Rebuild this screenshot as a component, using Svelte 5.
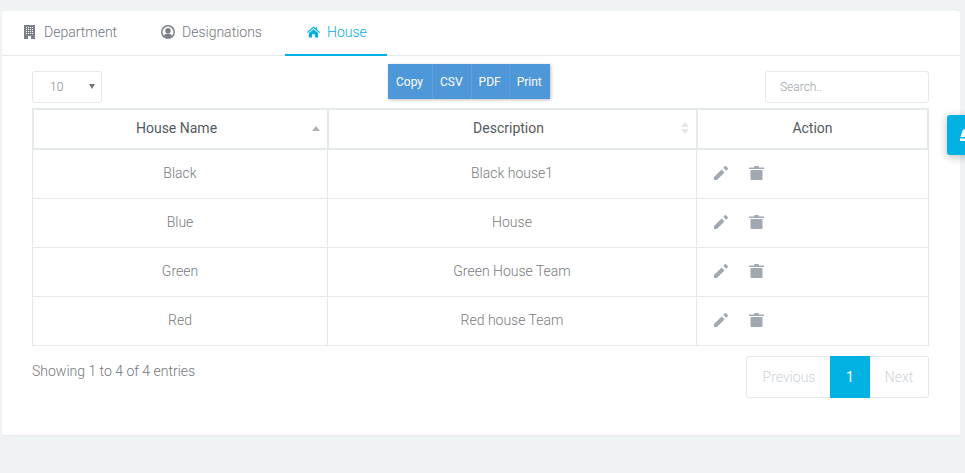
<script>
  const rows = [
    { name: 'Black', description: 'Black house1' },
    { name: 'Blue', description: 'House' },
    { name: 'Green', description: 'Green House Team' },
    { name: 'Red', description: 'Red house Team' }
  ];
  const exportButtons = ['Copy', 'CSV', 'PDF', 'Print'];
</script>

<main class="card">
  <nav class="tabs">
    <a class="tab tab-department" href="#department">
      <svg class="tab-icon building" viewBox="0 0 11 14" aria-hidden="true">
        <path fill-rule="evenodd" d="M0 0h11v14H0zM2 2v1h1V2zm2 0v1h1V2zm2 0v1h1V2zm2 0v1h1V2zM2 4v1h1V4zm2 0v1h1V4zm2 0v1h1V4zm2 0v1h1V4zM2 6v1h1V6zm2 0v1h1V6zm2 0v1h1V6zm2 0v1h1V6zM2 8v1h1V8zm2 0v1h1V8zm2 0v1h1V8zm2 0v1h1V8zM4 11v3h3v-3z"/>
      </svg>
      Department
    </a>
    <a class="tab tab-designations" href="#designations">
      <svg class="tab-icon user" viewBox="0 0 14 14" aria-hidden="true">
        <circle cx="7" cy="7" r="6.200" fill="none" stroke="currentColor" stroke-width="1.500"/>
        <circle cx="7" cy="5.800" r="2.700" fill="currentColor"/>
        <path d="M2.800 11.200c.6-2 2-2.800 4.200-2.800s3.600.8 4.200 2.800C10 12.400 8.600 13 7 13s-3-.6-4.200-1.800z" fill="currentColor"/>
      </svg>
      Designations
    </a>
    <a class="tab tab-house active" href="#house">
      <svg class="tab-icon home" viewBox="0 0 14 12" aria-hidden="true">
        <path d="M7 0 9.400 2.100V1H11v2.500L14 6.100l-.8.900L7 1.700.8 7 0 6.100z"/>
        <path d="M7 3 12 7.200V12H8.500V8.500h-3V12H2V7.200z"/>
      </svg>
      House
    </a>
  </nav>

  <section class="content">
    <div class="toolbar">
      <div class="select-wrap">
        <select aria-label="Entries per page">
          <option>10</option>
          <option>25</option>
          <option>50</option>
        </select>
      </div>
      <div class="exports">
        {#each exportButtons as label}
          <button type="button">{label}</button>
        {/each}
      </div>
      <input class="search" type="text" placeholder="Search.." />
    </div>

    <table>
      <colgroup>
        <col class="col-name" />
        <col class="col-description" />
        <col class="col-action" />
      </colgroup>
      <thead>
        <tr>
          <th class="sortable asc">House Name</th>
          <th class="sortable">Description</th>
          <th>Action</th>
        </tr>
      </thead>
      <tbody>
        {#each rows as row}
          <tr>
            <td>{row.name}</td>
            <td>{row.description}</td>
            <td class="actions">
              <button type="button" class="icon-btn" aria-label="Edit {row.name}">
                <svg class="pencil" viewBox="3 3 18 18" aria-hidden="true">
                  <path d="M3 17.250V21h3.750L16.500 11.250l-3.750-3.750L3 17.250zM20.710 7.040a1 1 0 0 0 0-1.410l-2.340-2.340a1 1 0 0 0-1.410 0l-2 2 3.750 3.750 2-2z"/>
                </svg>
              </button>
              <button type="button" class="icon-btn" aria-label="Delete {row.name}">
                <svg class="trash" viewBox="0 0 15 14" aria-hidden="true">
                  <path d="M5.500 0h4l.5 1.500h5V3H0V1.500h5zM1.500 4h12v9a1 1 0 0 1-1 1h-10a1 1 0 0 1-1-1z"/>
                </svg>
              </button>
            </td>
          </tr>
        {/each}
      </tbody>
    </table>

    <div class="footer">
      <p class="info">Showing 1 to 4 of 4 entries</p>
      <div class="pagination">
        <span class="page muted prev">Previous</span>
        <span class="page current">1</span>
        <span class="page muted next">Next</span>
      </div>
    </div>
  </section>
</main>

<button type="button" class="float-btn" aria-label="Settings">
  <svg viewBox="0 0 20 20" aria-hidden="true">
    <path d="M4 4.500h5l4 7.500H1.500z"/>
    <path d="M1 13.500h13v2.500H1z"/>
  </svg>
</button>

<style>
  :global(body) {
    margin: 0;
    background: #f0f3f4;
    font-family: Roboto, "Liberation Sans", sans-serif;
    font-weight: 300;
    font-size: 14px;
    color: #6f6f6f;
    overflow: hidden;
  }
  .card {
    box-sizing: border-box;
    width: 958px;
    height: 425px;
    margin: 11px 0 0 2px;
    background: #fff;
    border-radius: 3px;
    border-bottom: 1px solid #e6eaec;
  }
  .tabs {
    display: flex;
    height: 45px;
    box-sizing: border-box;
    border-bottom: 1px solid #e4e9ec;
  }
  .tab {
    display: flex;
    align-items: center;
    box-sizing: border-box;
    height: 45px;
    color: #6f7680;
    text-decoration: none;
    line-height: 1;
    padding-bottom: 4px;
  }
  .tab-department { width: 138px; padding-left: 22px; }
  .tab-designations { width: 145px; padding-left: 21px; }
  .tab-house {
    width: 102px;
    padding-left: 22px;
  }
  .active {
    color: #00b1e1;
    border-bottom: 2px solid #00b1e1;
    padding-bottom: 2px;
  }
  .tab-icon {
    fill: #7b8189;
    color: #7b8189;
    flex: none;
  }
  .building { width: 11px; height: 14px; margin-right: 9px; }
  .user { width: 14px; height: 14px; margin-right: 7px; }
  .home { width: 13px; height: 12px; margin-right: 7px; fill: #00b1e1; }

  .content { padding: 0 31px 0 30px; }
  .toolbar {
    display: grid;
    grid-template-columns: 356px auto 1fr;
    align-items: start;
    height: 52px;
  }
  .select-wrap {
    position: relative;
    width: 70px;
    height: 32px;
    margin-top: 15px;
  }
  .select-wrap::after {
    content: "";
    position: absolute;
    right: 7px;
    top: 13px;
    border-left: 3px solid transparent;
    border-right: 3px solid transparent;
    border-top: 5px solid #6f7680;
    pointer-events: none;
  }
  select {
    appearance: none;
    box-sizing: border-box;
    width: 100%;
    height: 100%;
    padding: 0 0 0 17px;
    background: #fff;
    border: 1px solid #e4e9ec;
    border-radius: 3px;
    font: 300 12px Roboto, "Liberation Sans", sans-serif;
    color: #7f868e;
  }
  .exports {
    display: flex;
    height: 35px;
    margin-top: 8px;
    background: #4e97d9;
    box-shadow: 1px 1px 3px rgba(0, 0, 0, 0.25);
  }
  .exports button {
    height: 35px;
    padding: 0 8px 0 7px;
    border: 0;
    border-left: 1px solid #5f9fdb;
    background: none;
    color: #fff;
    font: 400 12px Roboto, "Liberation Sans", sans-serif;
  }
  .exports button:first-child { border-left: 0; padding: 0 9px 0 8px; }
  .search {
    justify-self: end;
    box-sizing: border-box;
    width: 164px;
    height: 32px;
    margin-top: 15px;
    padding: 0 14px;
    border: 1px solid #e4e9ec;
    border-radius: 3px;
    font: 300 12px Roboto, "Liberation Sans", sans-serif;
    outline: none;
  }
  .search::placeholder { color: #9a9fa5; opacity: 1; }

  table {
    width: 897px;
    table-layout: fixed;
    border-collapse: separate;
    border-spacing: 0;
  }
  .col-name { width: 295px; }
  .col-description { width: 369px; }
  .col-action { width: 233px; }
  th, td {
    box-sizing: border-box;
    text-align: center;
    padding: 0;
    border-style: solid;
    border-color: #e4e9ec;
  }
  th {
    position: relative;
    height: 42px;
    padding-bottom: 2px;
    border-width: 2px 0 2px 2px;
    font-weight: 400;
    color: #555a60;
  }
  th:last-child { border-right-width: 2px; }
  .sortable { padding-right: 8px; }
  .sortable::before,
  .sortable::after {
    content: "";
    position: absolute;
    right: 7px;
    border-left: 4px solid transparent;
    border-right: 4px solid transparent;
  }
  .sortable::before { top: 12px; border-bottom: 5px solid #e4e6e8; }
  .sortable::after { top: 19px; border-top: 5px solid #e4e6e8; }
  .asc::before { top: 16px; border-bottom-color: #adb2b7; }
  .asc::after { display: none; }
  td {
    height: 49px;
    border-width: 0 0 1px 1px;
    color: #777b80;
    padding-bottom: 2px;
  }
  td:last-child { border-right-width: 1px; }
  td.actions {
    text-align: left;
    padding-left: 17px;
    padding-bottom: 4px;
  }
  .icon-btn {
    display: inline-block;
    margin-right: 18px;
    padding: 0;
    border: 0;
    background: none;
    vertical-align: middle;
  }
  .icon-btn svg { display: block; fill: #a0a9b1; }
  .pencil { width: 14px; height: 14px; }
  .trash { width: 15px; height: 14px; }

  .footer {
    display: flex;
    justify-content: space-between;
    align-items: flex-start;
    padding-top: 10px;
  }
  .info { margin: 7px 0 0; line-height: 16px; color: #73777c; }
  .pagination {
    display: flex;
    height: 42px;
    box-sizing: border-box;
  }
  .page {
    display: flex;
    align-items: center;
    justify-content: center;
    box-sizing: border-box;
    height: 42px;
  }
  .muted {
    border: 1px solid #e4e9ec;
    color: #ccd3da;
  }
  .prev { width: 84px; padding-left: 1px; border-right: 0; border-radius: 3px 0 0 3px; }
  .next { width: 59px; border-left: 0; border-radius: 0 3px 3px 0; }
  .current { width: 40px; background: #00b1e1; color: #fff; font-weight: 400; }

  .float-btn {
    position: absolute;
    left: 947px;
    top: 115px;
    width: 40px;
    height: 40px;
    padding: 0 0 0 12px;
    border: 0;
    border-radius: 3px;
    background: #00b1e1;
    box-shadow: 0 2px 8px rgba(0, 0, 0, 0.25);
  }
  .float-btn svg { display: block; width: 20px; height: 20px; fill: #fff; }
</style>
